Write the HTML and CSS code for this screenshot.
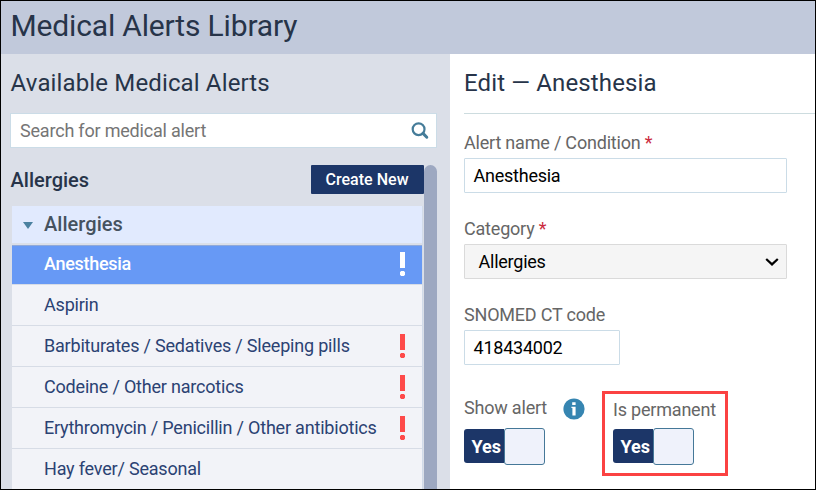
FILE: index.html
```html
<!DOCTYPE html>
<html lang="en">
<head>
<meta charset="utf-8">
<title>Medical Alerts Library</title>
<link rel="stylesheet" href="styles.css">
</head>
<body>
<div class="app">
  <header class="header"><h1><span>Medical Alerts Library</span></h1></header>
  <div class="columns">
    <aside class="library">
      <h2><span>Available Medical Alerts</span></h2>
      <div class="search">
        <span class="search-text">Search for medical alert</span>
        <svg width="18" height="18" viewBox="0 0 18 18" fill="none" stroke="#457c99"><circle cx="7.6" cy="7.2" r="5.9" stroke-width="2.2"/><path d="M12 11.4L15.8 15.2" stroke-width="3" stroke-linecap="round"/></svg>
      </div>
      <div class="scroll-area">
        <div class="content">
          <div class="toolbar"><h3><span>Allergies</span></h3><div class="create"><span>Create New</span></div></div>
          <div class="list">
            <div class="group"><i class="caret"></i><span class="group-name">Allergies</span></div>
            <div class="row selected"><span>Anesthesia</span><i class="mark"></i></div>
            <div class="row"><span>Aspirin</span></div>
            <div class="row"><span>Barbiturates / Sedatives / Sleeping pills</span><i class="mark"></i></div>
            <div class="row"><span>Codeine / Other narcotics</span><i class="mark"></i></div>
            <div class="row"><span>Erythromycin / Penicillin / Other antibiotics</span><i class="mark"></i></div>
            <div class="row"><span>Hay fever/ Seasonal</span></div>
          </div>
        </div>
        <div class="scrollbar"></div>
      </div>
    </aside>
    <main class="editor">
      <h2><span>Edit — Anesthesia</span></h2>
      <div class="form">
        <div class="label"><span>Alert name / Condition <b>*</b></span></div>
        <div class="field"><span>Anesthesia</span></div>
        <div class="label"><span>Category <b>*</b></span></div>
        <div class="field select"><span>Allergies</span>
          <svg width="14" height="10" viewBox="0 0 14 10" fill="none" stroke="#000" stroke-width="2.2"><path d="M1.2 2L7 7.4L12.8 2"/></svg>
        </div>
        <div class="label"><span>SNOMED CT code</span></div>
        <div class="field code"><span>418434002</span></div>
        <div class="toggles">
          <div class="option">
            <div class="option-label"><span>Show alert</span>
              <svg width="22" height="22" viewBox="0 0 22 22"><circle cx="11" cy="11" r="10.6" fill="#3685b1"/><path fill="#fff" d="M9.2 4.3h3.4v2.8H9.2zM8.4 8.8h4.2v8.8H9.4v-7.6h-1z"/></svg>
            </div>
            <div class="toggle"><span class="on">Yes</span><span class="knob"></span></div>
          </div>
          <div class="option highlighted">
            <div class="option-label"><span>Is permanent</span></div>
            <div class="toggle"><span class="on">Yes</span><span class="knob"></span></div>
          </div>
        </div>
      </div>
    </main>
  </div>
</div>
</body>
</html>
```
FILE: styles.css
```css
* { box-sizing: border-box; }
body { margin: 0; font-family: Roboto, "Liberation Sans", sans-serif; font-size: 18px; letter-spacing: -.2px; color: #273449; }
h1, h2, h3 { margin: 0; font-weight: 400; }
.app { width: 816px; height: 490px; border: 1px solid #000; display: flex; flex-direction: column; overflow: hidden; background: #fff; white-space: nowrap; }
.header { height: 53px; flex: none; background: #c1c9db; padding-left: 9.5px; }
h1 { font-size: 30px; line-height: 50px; letter-spacing: -.16px; }
.columns { display: flex; flex: 1; min-height: 0; }
.library { width: 449px; flex: none; background: #dbdfe8; padding: 0 13px 0 9px; display: flex; flex-direction: column; }
h2 { font-size: 24px; line-height: 58px; height: 59px; letter-spacing: .14px; }
.library h2 { padding-left: .6px; }
.search { height: 35px; flex: none; background: #fff; border: 1px solid #cbdce7; display: flex; align-items: center; justify-content: space-between; padding: 0 7px 0 9px; color: #757575; }
.scroll-area { display: flex; margin-top: 17px; flex: 1; min-height: 0; }
.content { width: 414px; }
.toolbar { display: flex; justify-content: space-between; height: 29px; align-items: center; }
h3 { font-size: 20px; font-weight: 500; letter-spacing: 0; padding-left: .6px; }
.create { width: 113px; height: 29px; line-height: 29px; border-radius: 1px; background: #1c3668; color: #fff; font-size: 16px; font-weight: 500; letter-spacing: .03px; text-align: center; padding-right: 1px; }
.scrollbar { width: 13px; background: #9da8c1; border-radius: 7px 7px 0 0; }
.list { width: 411px; margin: 12px 0 0 2px; border-right: 1px solid #d2dbe9; }
.group { height: 37px; background: #e1eafe; display: flex; align-items: center; padding: 0 0 2px 11px; font-size: 20px; font-weight: 500; letter-spacing: .04px; color: #45525f; margin-bottom: 2px; }
.caret { border: 5.5px solid transparent; border-top: 7px solid #4b81a0; border-bottom: 0; margin: 3px 10px 0 0; }
.group-name { margin-left: 1px; }
.row { height: 41px; display: flex; align-items: center; justify-content: space-between; padding: 0 17px 0 32px; background: #f2f3f8; border-bottom: 1px solid #d7dce6; color: #2b4273; }
.row span { padding-bottom: 2px; }
.selected { height: 40px; background: #6799f5; border-top: 1px solid #91a9d8; color: #fff; font-weight: 500; letter-spacing: -.3px; padding-bottom: 2px; }
.mark { width: 5px; height: 24px; background: radial-gradient(circle at 2.5px 21.5px, currentColor 2.5px, transparent 3px), linear-gradient(currentColor, currentColor) top / 5px 16px no-repeat; color: #fe4a4a; }
.selected .mark { color: #fff; }
.editor { flex: 1; padding-left: 14px; }
.form { border-top: 1px solid #cddcdf; }
.label { height: 44px; padding-top: 18px; line-height: 21px; color: #666; }
.label + .field + .label { height: 51px; padding-top: 25px; }
.label b { color: #cb2b3e; font-weight: 400; }
.field { width: 323px; height: 35px; border: 1px solid #cbdce7; border-radius: 1px; display: flex; align-items: center; padding: 0 8px 0 8.5px; color: #000; letter-spacing: -.24px; }
.select { background: #f5f5f5; border-color: #dadada; padding: 0 7px 0 13.5px; justify-content: space-between; }
.code { width: 156px; }
.toggles { display: flex; margin-top: 26px; gap: 17px; }
.option { width: 121px; padding-top: 3px; }
.option-label { display: flex; height: 34px; align-items: center; justify-content: space-between; color: #666; padding-bottom: 4px; }
.option-label span { padding-bottom: 3px; }
.highlighted { width: 126px; height: 85px; border: 3px solid #fb4242; padding: 0 8px; }
.highlighted .option-label { padding-bottom: 3px; }
.highlighted .option-label span { padding-bottom: 0; }
.toggle { display: flex; height: 37px; }
.on { width: 40px; height: 34px; margin-top: 1px; line-height: 35px; background: #1c3668; border-radius: 3px 0 0 3px; color: #fff; font-weight: 700; padding-left: 7.5px; letter-spacing: 0; }
.knob { width: 41px; height: 37px; background: #eff2fb; border: 1px solid #457898; border-radius: 3px; }
```
